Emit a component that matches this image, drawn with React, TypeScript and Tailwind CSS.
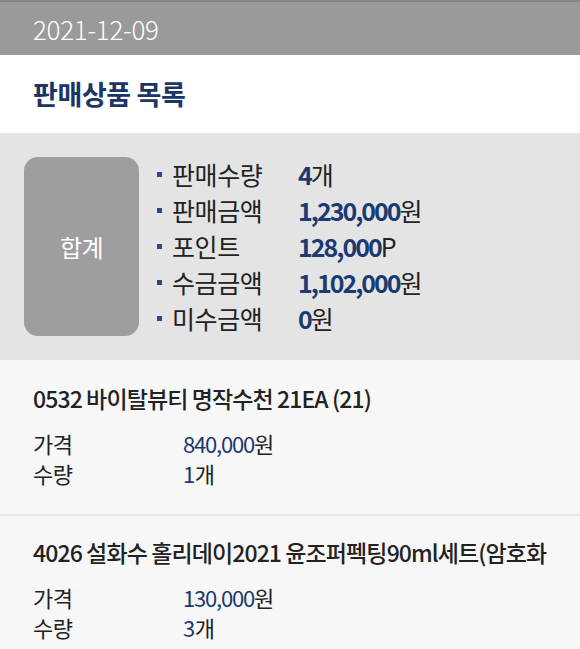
const FONT = "font-['Noto_Sans_CJK_KR','Noto_Sans',sans-serif]";

const summary = [
  { label: "판매수량", value: "4", unit: "개" },
  { label: "판매금액", value: "1,230,000", unit: "원" },
  { label: "포인트", value: "128,000", unit: "P" },
  { label: "수금금액", value: "1,102,000", unit: "원" },
  { label: "미수금액", value: "0", unit: "원" },
];

const items = [
  { name: "0532 바이탈뷰티 명작수천 21EA (21)", price: "840,000", qty: "1" },
  { name: "4026 설화수 홀리데이2021 윤조퍼펙팅90ml세트(암호화", price: "130,000", qty: "3" },
];

export default function App() {
  return (
    <div className={`${FONT} w-[580px] h-[649px] overflow-hidden bg-[#f7f7f7] text-[#222]`}>
      {/* date bar */}
      <div className="h-[55px] bg-[#9a9a9a] border-t-2 border-[#858585] flex items-center px-[33px]">
        <span className="text-[26px] font-light text-white tracking-[-0.3px]">2021-12-09</span>
      </div>

      {/* title */}
      <div className="h-[78px] bg-white flex items-center px-[33px]">
        <h1 className="text-[27px] font-bold text-[#1b3565] tracking-[-0.4px]">판매상품 목록</h1>
      </div>

      {/* summary */}
      <div className="h-[227px] bg-[#e4e4e4] flex items-center pl-[24px] gap-[18px]">
        <div className="w-[115px] h-[179px] rounded-[14px] bg-[#9e9e9e] flex items-center justify-center">
          <span className="text-[24px] text-white tracking-[-0.5px]">합계</span>
        </div>
        <ul className="flex flex-col">
          {summary.map((s) => (
            <li key={s.label} className="flex items-center h-[36px] text-[25px] tracking-[-0.4px]">
              <span className="w-[5px] h-[5px] bg-[#2a4a85] mr-[10px]" />
              <span className="w-[126px] text-[#222]">{s.label}</span>
              <span className="font-semibold text-[#1b3a72] tracking-[-2px]">{s.value}</span>
              <span className="text-[#222]">{s.unit}</span>
            </li>
          ))}
        </ul>
      </div>

      {/* items */}
      {items.map((it, i) => (
        <div
          key={it.name}
          className={`bg-[#f7f7f7] px-[33px] ${i === 0 ? "pt-[22px] pb-[26px] border-b-2 border-[#e6e6e6]" : "pt-[20px]"}`}
        >
          <div className="text-[23px] font-medium tracking-[-0.9px] whitespace-nowrap leading-[32px]">
            {it.name}
          </div>
          <div className="mt-[14px] text-[22px] leading-[30px] tracking-[-0.5px]">
            <div className="flex">
              <span className="w-[150px]">가격</span>
              <span>
                <span className="text-[#1b3a72] tracking-[-1.2px]">{it.price}</span>원
              </span>
            </div>
            <div className="flex">
              <span className="w-[150px]">수량</span>
              <span>
                <span className="text-[#1b3a72]">{it.qty}</span>개
              </span>
            </div>
          </div>
        </div>
      ))}
    </div>
  );
}
